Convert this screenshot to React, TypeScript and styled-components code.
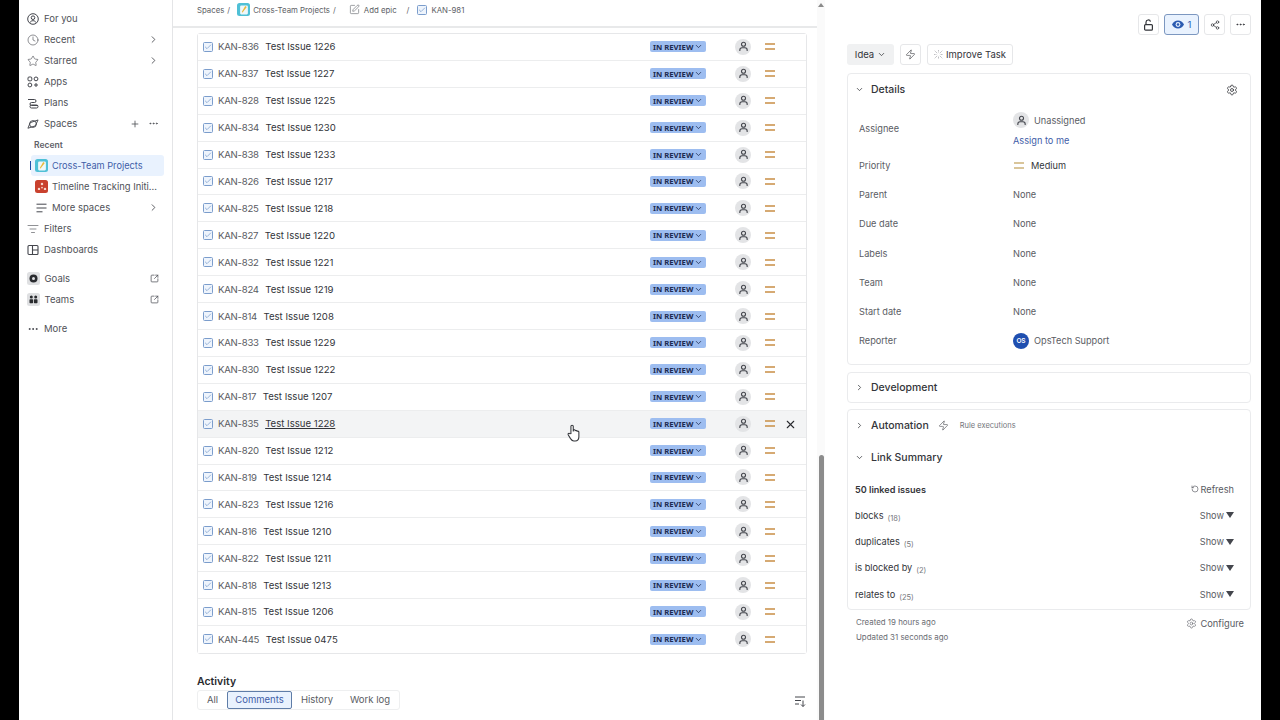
import React from "react";
import styled, { createGlobalStyle } from "styled-components";
import {
  Clock, Star, ChevronRight, ChevronDown, Plus, Ellipsis, ListFilter, SquareArrowOutUpRight,
  SquarePen, Check, X, Share2, Zap, Settings, RotateCcw,
} from "lucide-react";

const Global = createGlobalStyle`
  html, body { margin: 0; padding: 0; background: #000; }
  body { font-family: Inter, "Noto Sans", sans-serif; color: #292a2e; }
  * { box-sizing: border-box; }
`;

const Screen = styled.div`
  width: 1280px; height: 720px; display: flex; overflow: hidden; background: #000; position: relative;
`;
const Page = styled.div`
  margin: 0 19px; flex: 1; display: flex; background: #fff; min-width: 0;
`;

/* Sidebar */
const Sidebar = styled.nav`
  width: 154px; flex: none; border-right: 1px solid #e4e5e7; padding: 8px 0 0 8px; display: flex; flex-direction: column;
`;
const NavItem = styled.div<{ $indent?: number; $mt?: number }>`
  height: 21px; display: flex; align-items: center; gap: 5px; font-size: 9.5px; color: #505258; flex: none;
  padding-left: ${p => p.$indent ?? 0}px; margin-top: ${p => p.$mt ?? 0}px; padding-right: 13px; white-space: nowrap;
`;
const NavIcon = styled.span`
  width: 12px; height: 12px; flex: none; display: flex; align-items: center; justify-content: center; color: #44464d;
`;
const NavLabel = styled.span`
  flex: 1; min-width: 0;
`;
const NavTrail = styled.span`
  display: flex; align-items: center; gap: 8px; color: #505258; flex: none;
`;
const RecentLabel = styled.div`
  height: 21px; display: flex; align-items: center; font-size: 8.5px; font-weight: 600; color: #5f6168; padding-left: 7px;
`;
const SpaceItem = styled.div<{ $active?: boolean }>`
  height: 21px; width: 133px; margin-left: 4px; display: flex; align-items: center; gap: 4px; padding-left: 4px; position: relative; border-radius: 3px;
  font-size: ${p => (p.$active ? "9.2px" : "9.4px")};
  background: ${p => (p.$active ? "#e9f2fe" : "transparent")};
  color: ${p => (p.$active ? "#3f5ea8" : "#505258")};
  white-space: nowrap;
`;
const ActiveTick = styled.span`
  position: absolute; left: -1px; top: 6px; width: 1px; height: 9px; background: #1f4fa8;
`;
const SpaceIcon = styled.span<{ $bg: string }>`
  width: 13px; height: 13px; border-radius: 2.5px; background: ${p => p.$bg}; flex: none; display: flex; align-items: center; justify-content: center;
`;
const GrayIcon = styled.span`
  width: 13px; height: 13px; border-radius: 2.5px; background: #dfe0e2; margin-left: -0.5px; flex: none; display: flex; align-items: center; justify-content: center;
`;

/* Main */
const Main = styled.main`
  width: 644px; flex: none; display: flex; flex-direction: column; min-width: 0;
`;
const Crumbs = styled.div`
  height: 28px; flex: none; border-bottom: 2px solid #e8e9ea; padding: 0 0 7px 24px; display: flex; align-items: center; font-size: 7.8px; color: #5c5e65; white-space: nowrap;
`;
const Crumb = styled.span<{ $ml?: number }>`
  display: inline-flex; align-items: center; gap: 4px; margin-left: ${p => p.$ml ?? 0}px;
`;
const Table = styled.div`
  margin: 5px 0 0 24px; width: 610px; border: 1px solid #e6e7e9; border-radius: 3px; flex: none;
`;
const Row = styled.div<{ $hover?: boolean }>`
  height: 26.92px; display: flex; align-items: center; padding-left: 5px; position: relative; background: ${p => (p.$hover ? "#f3f4f5" : "#fff")};
  border-bottom: 1px solid #ecedee;
  &:last-child { border-bottom: none; }
`;
const TaskBox = styled.span`
  width: 10px; height: 10px; border: 1px solid #7b9dcc; border-radius: 1.5px; background: #eef4fc; flex: none; display: inline-flex; align-items: center; justify-content: center; color: #4a78b8;
`;
const IssueId = styled.span`
  margin-left: 5px; font-size: 9.6px; color: #5a5c63; flex: none; letter-spacing: -0.25px;
`;
const Summary = styled.span<{ $under?: boolean }>`
  margin-left: 6.5px; font-size: 9.6px; color: #33353a; flex: 1; text-decoration: ${p => (p.$under ? "underline" : "none")}; white-space: nowrap;
`;
const Status = styled.span`
  width: 56px; height: 11px; background: #9dbdf0; border-radius: 2px; display: flex; align-items: center; padding-left: 3px; gap: 1px; font-size: 7.7px; font-weight: 700; color: #1c2b50; flex: none; margin-right: 29px; white-space: nowrap;
  font-family: "Noto Sans", sans-serif;
`;
const Avatar = styled.span`
  width: 16px; height: 16px; border-radius: 50%; background: #e3e4e6; color: #44464d; flex: none; display: flex; align-items: center; justify-content: center;
`;
const PriorityIcon = styled.svg<{ $ml?: number }>`
  width: 10px; height: 7px; margin-left: ${p => p.$ml ?? 14}px; flex: none;
`;
const RowEnd = styled.span`
  width: 31px; flex: none;
`;
const Unlink = styled.span`
  position: absolute; right: 9px; top: 7px; color: #292a2e; display: flex;
`;
const ActivityTitle = styled.h3`
  margin: 21px 0 0 24px; font-size: 10.5px; font-weight: 600; color: #292a2e; line-height: 13px;
`;
const ActivityBar = styled.div`
  display: flex; align-items: flex-start; margin: 2px 0 0 24px; width: 610px;
`;
const Tabs = styled.div`
  display: flex; align-items: center; height: 20px; border: 1px solid #eeeff0; border-radius: 3px; font-size: 9.5px; color: #5a5c63; padding: 0 1px 0 0;
`;
const Tab = styled.span<{ $active?: boolean; $w: number }>`
  width: ${p => p.$w}px; height: 18px; display: flex; align-items: center; justify-content: center; border-radius: 2px;
  ${p => p.$active ? "background: #e9f2fe; border: 1px solid #5f7da8; color: #3f5ea8;" : ""}
`;
const SortBtn = styled.span`
  margin-left: auto; margin-right: 1px; margin-top: 6px; color: #44464d; display: flex;
`;

/* Scrollbar */
const Scroll = styled.div`
  width: 8px; flex: none; display: flex; flex-direction: column; align-items: center; background: #fafafa;
`;
const ScrollArrow = styled.span`
  width: 0; height: 0; margin-top: 3px; border-left: 3px solid transparent; border-right: 3px solid transparent; border-bottom: 4px solid #8a8a8a;
`;
const ScrollThumb = styled.span`
  width: 5px; margin-top: auto; height: 265px; background: #8c8c8c; border-radius: 3px 3px 0 0;
`;

/* Right panel */
const Panel = styled.aside`
  width: 404px; margin-left: 22px; flex: none; display: flex; flex-direction: column;
`;
const TopActions = styled.div`
  margin-top: 14px; display: flex; justify-content: flex-end; gap: 5px; height: 21px; flex: none;
`;
const IconBtn = styled.span<{ $active?: boolean; $w?: number }>`
  width: ${p => p.$w ?? 21}px; height: 21px; border-radius: 3px; display: flex; align-items: center; justify-content: center; gap: 4px; font-size: 9.5px;
  border: 1px solid ${p => (p.$active ? "#7c97c0" : "#e6e7e9")};
  background: ${p => (p.$active ? "#e9f2fe" : "#fff")};
  color: ${p => (p.$active ? "#2c5bb0" : "#33353a")};
`;
const ActionRow = styled.div`
  margin-top: 9px; display: flex; gap: 6px; height: 21px; flex: none;
`;
const IdeaBtn = styled.span`
  width: 47px; height: 21px; background: #f0f1f2; border-radius: 3px; display: flex; align-items: center; justify-content: center; gap: 3px; font-size: 9.5px; color: #33353a;
`;
const ImproveBtn = styled.span`
  width: 86px; height: 21px; border: 1px solid #e6e7e9; border-radius: 3px; display: flex; align-items: center; justify-content: center; gap: 3px; font-size: 9.5px; color: #33353a;
`;
const Card = styled.section<{ $mt?: number }>`
  border: 1px solid #eaebed; border-radius: 4px; margin-top: ${p => p.$mt ?? 6}px; flex: none; background: #fff;
`;
const CardHead = styled.div<{ $h?: number }>`
  height: ${p => p.$h ?? 31}px; display: flex; align-items: center; padding: 0 12px 0 7px; gap: 7px; font-size: 10.5px; color: #33353a; font-weight: 500; white-space: nowrap;
`;
const CardTitle = styled.span`
  margin-left: 0;
`;
const HeadTrail = styled.span`
  margin-left: auto; display: flex; color: #33353a;
`;
const HeadZap = styled(Zap)`
  margin-left: 2px;
`;
const RuleText = styled.span`
  font-size: 7.5px; color: #74767c; font-weight: 400; margin-left: 4px;
`;
const Fields = styled.div`
  display: grid; grid-template-columns: 154px 1fr; padding: 3px 12px 8.5px 11px; align-items: center; font-size: 9.2px; color: #5a5c63;
`;
const FieldLabel = styled.div<{ $h?: number }>`
  height: ${p => p.$h ?? 29.3}px; display: flex; align-items: center; align-self: start;
`;
const FieldValue = styled.div`
  height: 29.3px; display: flex; align-items: center; gap: 5px; color: #5a5c63;
`;
const AssigneeValue = styled.div`
  height: 42.5px; display: flex; flex-direction: column; padding-top: 4px; gap: 5.5px;
`;
const AssigneeLine = styled.div`
  display: flex; align-items: center; gap: 5px;
`;
const LinkText = styled.span`
  color: #3f5ea8; line-height: 13px;
`;
const DarkValue = styled.span`
  color: #33353a; margin-left: 2px;
`;
const OsAvatar = styled.span`
  width: 16px; height: 16px; border-radius: 50%; background: #1f4fb0; color: #fff; font-size: 6.5px; font-weight: 600; display: flex; align-items: center; justify-content: center;
`;
const LinkBody = styled.div`
  padding: 0 16px 2px 7px; font-size: 9.2px; color: #33353a;
`;
const LinkHead = styled.div`
  height: 26px; display: flex; align-items: center; justify-content: space-between; margin-top: 3px; font-weight: 600; font-size: 9.1px;
`;
const RefreshText = styled.span`
  display: flex; align-items: center; gap: 2px; font-weight: 400; color: #5a5c63; font-size: 9.2px;
`;
const LinkRow = styled.div`
  height: 26.3px; display: flex; align-items: center; justify-content: space-between;
`;
const LinkName = styled.span`
  display: flex; align-items: baseline; gap: 4px;
`;
const LinkCount = styled.span`
  font-size: 7.5px; color: #74767c; position: relative; top: 2px;
`;
const ShowText = styled.span`
  display: flex; align-items: center; gap: 2px; color: #5a5c63;
`;
const Tri = styled.span`
  width: 0; height: 0; border-left: 4px solid transparent; border-right: 4px solid transparent; border-top: 6px solid #44464d;
`;
const Foot = styled.div`
  display: flex; justify-content: space-between; padding: 5px 7px 0 9px; flex: none;
`;
const FootDates = styled.div`
  font-size: 7.9px; color: #6b6d74; line-height: 14.5px;
`;
const Configure = styled.span`
  display: flex; align-items: center; gap: 3px; font-size: 9.3px; color: #5a5c63; height: 14px; margin-top: 1px;
`;
const Cursor = styled.svg`
  position: absolute; left: 567px; top: 424px;
`;

const rows: [string, string][] = [
  ["KAN-836", "Test Issue 1226"], ["KAN-837", "Test Issue 1227"], ["KAN-828", "Test Issue 1225"],
  ["KAN-834", "Test Issue 1230"], ["KAN-838", "Test Issue 1233"], ["KAN-826", "Test Issue 1217"],
  ["KAN-825", "Test Issue 1218"], ["KAN-827", "Test Issue 1220"], ["KAN-832", "Test Issue 1221"],
  ["KAN-824", "Test Issue 1219"], ["KAN-814", "Test Issue 1208"], ["KAN-833", "Test Issue 1229"],
  ["KAN-830", "Test Issue 1222"], ["KAN-817", "Test Issue 1207"], ["KAN-835", "Test Issue 1228"],
  ["KAN-820", "Test Issue 1212"], ["KAN-819", "Test Issue 1214"], ["KAN-823", "Test Issue 1216"],
  ["KAN-816", "Test Issue 1210"], ["KAN-822", "Test Issue 1211"], ["KAN-818", "Test Issue 1213"],
  ["KAN-815", "Test Issue 1206"], ["KAN-445", "Test Issue 0475"],
];

const Person = ({ s = 11 }: { s?: number }) => (
  <svg width={s} height={s} viewBox="0 0 12 12" fill="none" stroke="currentColor" strokeWidth="1.2">
    <circle cx="6" cy="3.6" r="2.2" />
    <path d="M2 11v-1.2A2.4 2.4 0 0 1 4.4 7.4h3.2A2.4 2.4 0 0 1 10 9.8V11" />
  </svg>
);
const Priority = ({ color = "#c98f45", ml }: { color?: string; ml?: number }) => (
  <PriorityIcon $ml={ml} viewBox="0 0 10 7" fill="none" stroke={color} strokeWidth="1.5">
    <path d="M0 1h10M0 6h10" />
  </PriorityIcon>
);
const ForYou = () => (
  <svg width="12" height="12" viewBox="0 0 12 12" fill="none" stroke="currentColor" strokeWidth="1">
    <circle cx="6" cy="6" r="5.3" /><circle cx="6" cy="4.7" r="1.8" /><path d="M3 9.6c.5-1.3 1.6-1.9 3-1.9s2.5.6 3 1.9" />
  </svg>
);
const Apps = () => (
  <svg width="12" height="12" viewBox="0 0 12 12" fill="none" stroke="currentColor" strokeWidth="1">
    <rect x="1" y="1" width="3.8" height="3.8" rx="1" /><circle cx="9" cy="2.9" r="1.9" />
    <circle cx="2.9" cy="9" r="1.9" /><path d="M9 7v4M7 9h4" />
  </svg>
);
const Plans = () => (
  <svg width="12" height="12" viewBox="0 0 12 12" fill="none" stroke="currentColor" strokeWidth="1">
    <path d="M1 2.5h6.5a1.5 1.5 0 0 1 0 3H4.5a1.5 1.5 0 0 0 0 3H11" /><rect x="3" y="8" width="8" height="3" rx="1.5" />
  </svg>
);
const Planet = () => (
  <svg width="13" height="12" viewBox="0 0 13 12" fill="none" stroke="currentColor" strokeWidth="1">
    <circle cx="6.5" cy="6" r="3.7" /><path d="M3.4 4.6 12 1.6 9 8 1 10.6z" />
  </svg>
);
const Dash = () => (
  <svg width="12" height="12" viewBox="0 0 12 12" fill="none" stroke="currentColor" strokeWidth="1.1">
    <rect x="1" y="1.5" width="10" height="9" rx="1" /><path d="M5.5 1.5v9M5.5 6H11" />
  </svg>
);
const MoreLines = () => (
  <svg width="11" height="10" viewBox="0 0 11 10" fill="none" stroke="currentColor" strokeWidth="1">
    <path d="M.5 1.2h10M.5 5h10M.5 8.8h6" />
  </svg>
);
const Goal = () => (
  <svg width="9" height="9" viewBox="0 0 9 9"><circle cx="4.5" cy="4.5" r="4" fill="#292a2e" /><circle cx="4.5" cy="4.5" r="1.5" fill="#dfe0e2" /></svg>
);
const Teams = () => (
  <svg width="9" height="9" viewBox="0 0 9 9" fill="#292a2e">
    <circle cx="2.3" cy="2" r="1.5" /><circle cx="6.7" cy="2" r="1.5" /><rect x="0.5" y="4.3" width="3.6" height="4" rx=".7" /><rect x="4.9" y="4.3" width="3.6" height="4" rx=".7" />
  </svg>
);
const SpaceNote = () => (
  <svg width="10" height="10" viewBox="0 0 9 9">
    <rect x="1" y=".5" width="7" height="8" rx="1" fill="#eef7fa" /><path d="M3 7 7 1.8 5.6 1 2.6 6z" fill="#e8b93a" />
  </svg>
);
const SpaceDots = () => (
  <svg width="10" height="10" viewBox="0 0 9 9" fill="#f6d5cc">
    <circle cx="4.5" cy="1.8" r="1.1" /><circle cx="1.8" cy="6.2" r="1.1" /><circle cx="7.2" cy="6.2" r="1.1" /><circle cx="4.5" cy="5" r=".8" />
  </svg>
);
const Sparkle = () => (
  <svg width="9" height="9" viewBox="0 0 9 9" fill="none" stroke="#8a8c92" strokeWidth=".8" strokeDasharray="1 .6">
    <path d="M.8.8l2.4 2.4M8.2.8 5.8 3.2M.8 8.2l2.4-2.4M8.2 8.2 5.8 5.8M4.5.3v2M4.5 6.7v2M.3 4.5h2M6.7 4.5h2" />
  </svg>
);
const OpenLock = () => (
  <svg width="11" height="12" viewBox="0 0 11 12" fill="none" stroke="currentColor" strokeWidth="1.2">
    <rect x="1.6" y="5.6" width="7.8" height="5.6" rx="1" /><path d="M3 5.6V3.2a2.3 2.3 0 0 1 4.5-.6" />
  </svg>
);
const FilledEye = () => (
  <svg width="12" height="9" viewBox="0 0 12 9">
    <path d="M0 4.5C1.3 1.8 3.5.4 6 .4s4.7 1.4 6 4.1C10.7 7.2 8.5 8.6 6 8.6S1.3 7.2 0 4.5z" fill="#2c5bb0" />
    <circle cx="6" cy="4.5" r="2.4" fill="#e9f2fe" /><circle cx="6" cy="4.5" r="1.3" fill="#2c5bb0" />
  </svg>
);
const SortLines = () => (
  <svg width="12" height="11" viewBox="0 0 12 11" fill="none" stroke="currentColor" strokeWidth="1">
    <path d="M1 1h10M1 4.5h6M1 8h4M9 4.5v6M7 8.5l2 2 2-2" />
  </svg>
);
const MiniTask = () => (
  <TaskBox><Check size={8} strokeWidth={1.6} /></TaskBox>
);

export default function App() {
  return (
    <Screen>
      <Global />
      <Page>
        <Sidebar>
          <NavItem><NavIcon><ForYou /></NavIcon><NavLabel>For you</NavLabel></NavItem>
          <NavItem><NavIcon><Clock size={12} strokeWidth={1.2} /></NavIcon><NavLabel>Recent</NavLabel><NavTrail><ChevronRight size={11} /></NavTrail></NavItem>
          <NavItem><NavIcon><Star size={12} strokeWidth={1.2} /></NavIcon><NavLabel>Starred</NavLabel><NavTrail><ChevronRight size={11} /></NavTrail></NavItem>
          <NavItem><NavIcon><Apps /></NavIcon><NavLabel>Apps</NavLabel></NavItem>
          <NavItem><NavIcon><Plans /></NavIcon><NavLabel>Plans</NavLabel></NavItem>
          <NavItem><NavIcon><Planet /></NavIcon><NavLabel>Spaces</NavLabel><NavTrail><Plus size={10} /><Ellipsis size={11} /></NavTrail></NavItem>
          <RecentLabel>Recent</RecentLabel>
          <SpaceItem $active><ActiveTick /><SpaceIcon $bg="#4fc0d6"><SpaceNote /></SpaceIcon>Cross-Team Projects</SpaceItem>
          <SpaceItem><SpaceIcon $bg="#c9412e"><SpaceDots /></SpaceIcon><NavLabel>Timeline Tracking Initi...</NavLabel></SpaceItem>
          <NavItem $indent={8}><NavIcon><MoreLines /></NavIcon><NavLabel>More spaces</NavLabel><NavTrail><ChevronRight size={11} /></NavTrail></NavItem>
          <NavItem><NavIcon><ListFilter size={12} strokeWidth={1.2} /></NavIcon><NavLabel>Filters</NavLabel></NavItem>
          <NavItem><NavIcon><Dash /></NavIcon><NavLabel>Dashboards</NavLabel></NavItem>
          <NavItem $mt={8}><GrayIcon><Goal /></GrayIcon><NavLabel>Goals</NavLabel><NavTrail><SquareArrowOutUpRight size={9} /></NavTrail></NavItem>
          <NavItem><GrayIcon><Teams /></GrayIcon><NavLabel>Teams</NavLabel><NavTrail><SquareArrowOutUpRight size={9} /></NavTrail></NavItem>
          <NavItem $mt={8}><NavIcon><Ellipsis size={12} /></NavIcon><NavLabel>More</NavLabel></NavItem>
        </Sidebar>

        <Main>
          <Crumbs>
            <Crumb>Spaces</Crumb><Crumb $ml={3}>/</Crumb>
            <Crumb $ml={7}><SpaceIcon $bg="#4fc0d6"><SpaceNote /></SpaceIcon></Crumb>
            <Crumb $ml={3}>Cross-Team Projects</Crumb><Crumb $ml={3}>/</Crumb>
            <Crumb $ml={13}><SquarePen size={11} strokeWidth={1.3} /> Add epic</Crumb><Crumb $ml={10}>/</Crumb>
            <Crumb $ml={8}><MiniTask /> KAN-981</Crumb>
          </Crumbs>
          <Table>
            {rows.map(([id, title]) => {
              const hover = id === "KAN-835";
              return (
                <Row key={id} $hover={hover}>
                  <MiniTask />
                  <IssueId>{id}</IssueId>
                  <Summary $under={hover}>{title}</Summary>
                  <Status>IN REVIEW<ChevronDown size={9} strokeWidth={2} /></Status>
                  <Avatar><Person /></Avatar>
                  <Priority />
                  <RowEnd />
                  {hover && <Unlink><X size={13} /></Unlink>}
                </Row>
              );
            })}
          </Table>
          <ActivityTitle>Activity</ActivityTitle>
          <ActivityBar>
            <Tabs>
              <Tab $w={29}>All</Tab>
              <Tab $active $w={65}>Comments</Tab>
              <Tab $w={50}>History</Tab>
              <Tab $w={56}>Work log</Tab>
            </Tabs>
            <SortBtn><SortLines /></SortBtn>
          </ActivityBar>
        </Main>

        <Scroll><ScrollArrow /><ScrollThumb /></Scroll>

        <Panel>
          <TopActions>
            <IconBtn><OpenLock /></IconBtn>
            <IconBtn $active $w={35}><FilledEye />1</IconBtn>
            <IconBtn><Share2 size={10} strokeWidth={1.7} /></IconBtn>
            <IconBtn><Ellipsis size={11} /></IconBtn>
          </TopActions>
          <ActionRow>
            <IdeaBtn>Idea <ChevronDown size={9} /></IdeaBtn>
            <IconBtn><Zap size={11} strokeWidth={1.3} /></IconBtn>
            <ImproveBtn><Sparkle /> Improve Task</ImproveBtn>
          </ActionRow>
          <Card $mt={8}>
            <CardHead $h={31}><ChevronDown size={9} /><CardTitle>Details</CardTitle><HeadTrail><Settings size={12} strokeWidth={1.6} /></HeadTrail></CardHead>
            <Fields>
              <FieldLabel $h={40}>Assignee</FieldLabel>
              <AssigneeValue>
                <AssigneeLine><Avatar><Person /></Avatar>Unassigned</AssigneeLine>
                <LinkText>Assign to me</LinkText>
              </AssigneeValue>
              <FieldLabel>Priority</FieldLabel><FieldValue><Priority color="#cdb27a" ml={1} /><DarkValue>Medium</DarkValue></FieldValue>
              <FieldLabel>Parent</FieldLabel><FieldValue>None</FieldValue>
              <FieldLabel>Due date</FieldLabel><FieldValue>None</FieldValue>
              <FieldLabel>Labels</FieldLabel><FieldValue>None</FieldValue>
              <FieldLabel>Team</FieldLabel><FieldValue>None</FieldValue>
              <FieldLabel>Start date</FieldLabel><FieldValue>None</FieldValue>
              <FieldLabel>Reporter</FieldLabel><FieldValue><OsAvatar>OS</OsAvatar>OpsTech Support</FieldValue>
            </Fields>
          </Card>
          <Card $mt={7}>
            <CardHead $h={29}><ChevronRight size={9} /><CardTitle>Development</CardTitle></CardHead>
          </Card>
          <Card $mt={6}>
            <CardHead $h={31}><ChevronRight size={9} /><CardTitle>Automation</CardTitle><HeadZap size={11} strokeWidth={1.2} /><RuleText>Rule executions</RuleText></CardHead>
            <CardHead $h={32}><ChevronDown size={9} /><CardTitle>Link Summary</CardTitle></CardHead>
            <LinkBody>
              <LinkHead>50 linked issues<RefreshText><RotateCcw size={8} /> Refresh</RefreshText></LinkHead>
              <LinkRow><LinkName>blocks <LinkCount>(18)</LinkCount></LinkName><ShowText>Show <Tri /></ShowText></LinkRow>
              <LinkRow><LinkName>duplicates <LinkCount>(5)</LinkCount></LinkName><ShowText>Show <Tri /></ShowText></LinkRow>
              <LinkRow><LinkName>is blocked by <LinkCount>(2)</LinkCount></LinkName><ShowText>Show <Tri /></ShowText></LinkRow>
              <LinkRow><LinkName>relates to <LinkCount>(25)</LinkCount></LinkName><ShowText>Show <Tri /></ShowText></LinkRow>
            </LinkBody>
          </Card>
          <Foot>
            <FootDates>Created 19 hours ago<br />Updated 31 seconds ago</FootDates>
            <Configure><Settings size={11} strokeWidth={1.3} /> Configure</Configure>
          </Foot>
        </Panel>
      </Page>
      <Cursor width="14" height="18" viewBox="0 0 13 17" fill="#fff" stroke="#33353a" strokeWidth="1">
        <path d="M3.6 9V2.2a1.1 1.1 0 0 1 2.2 0V7l.2-1.3c.8-.5 1.6-.2 1.7.6.8-.5 1.6-.2 1.7.6.9-.4 1.7.1 1.7 1V12c0 2.2-1.3 4-3.5 4H6.3C5 16 4 15 3.2 13.8L1 10.2c-.5-1 .8-1.9 1.5-1z" />
      </Cursor>
    </Screen>
  );
}
